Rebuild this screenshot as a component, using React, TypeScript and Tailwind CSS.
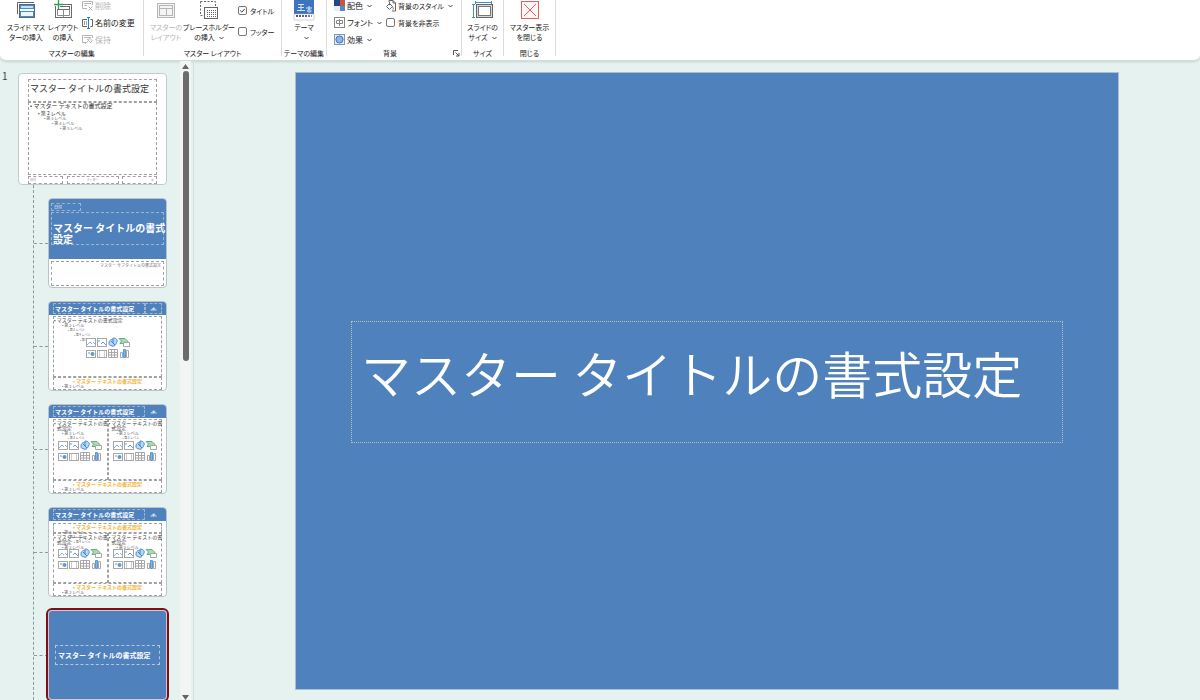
import { useState } from 'react'
import type { ReactNode } from 'react'
import clsx from 'clsx'

const MASTER_TITLE = 'マスター タイトルの書式設定'
const MASTER_TEXT = 'マスター テキストの書式設定'

/* ---------- Ribbon parts ---------- */

function Group({ label, className, launcher, children }: { label: string; className: string; launcher?: boolean; children: ReactNode }) {
  return (
    <section className={clsx('flex shrink-0 flex-col border-r border-[#dcdcdc]', className)}>
      <div className="flex h-12 shrink-0 items-start">{children}</div>
      <div className="flex h-[11px] shrink-0 items-center">
        <h2 className="flex-1 whitespace-nowrap text-center leading-[11px]">{label}</h2>
        {launcher && (
          <button aria-label="背景の書式設定" className="pr-px">
            <svg width="7" height="7" viewBox="0 0 7 7" fill="none" stroke="#555">
              <path d="M.5 5V.5H5M2.500 2.500l3.500 3.500M6 3v3H3" />
            </svg>
          </button>
        )}
      </div>
    </section>
  )
}

function Caret() {
  return (
    <svg width="5" height="4" viewBox="0 0 5 4" fill="none" stroke="#444" className="ml-1 inline-block shrink-0">
      <path d="M.5 1l2 2 2-2" />
    </svg>
  )
}

function BigButton({ icon, children, className, disabled }: { icon: ReactNode; children: ReactNode; className: string; disabled?: boolean }) {
  return (
    <button disabled={disabled} className={clsx('flex shrink-0 flex-col items-center whitespace-nowrap leading-[10px] disabled:text-[#b5b5b5]', className)}>
      <span className="flex h-[22px] items-start">{icon}</span>
      <span className="text-center">{children}</span>
    </button>
  )
}

function SmallButton({ icon, label, caret, disabled }: { icon: ReactNode; label: string; caret?: boolean; disabled?: boolean }) {
  return (
    <button disabled={disabled} className="flex h-[17px] items-center whitespace-nowrap leading-[10px] disabled:text-[#b5b5b5]">
      <span className="mr-[2px] shrink-0">{icon}</span>
      {label}
      {caret && <Caret />}
    </button>
  )
}

function Check({ label, defaultChecked }: { label: string; defaultChecked?: boolean }) {
  return (
    <label className="flex h-[17px] items-center gap-[3px] whitespace-nowrap leading-[10px]">
      <span className="grid">
        <input
          type="checkbox"
          defaultChecked={defaultChecked}
          className="peer col-start-1 row-start-1 size-[9px] appearance-none rounded-[2px] border border-[#777] bg-white"
        />
        <svg viewBox="0 0 9 9" fill="none" stroke="#333" className="pointer-events-none invisible col-start-1 row-start-1 size-[9px] peer-checked:visible">
          <path d="M2.200 4.500l1.600 1.600 3-3.200" />
        </svg>
      </span>
      {label}
    </label>
  )
}

const slideMasterIcon = (
  <svg width="20" height="20" viewBox="0 0 20 20" fill="none">
    <path d="M1.500 14V2.500H18" stroke="#666" />
    <rect x="3.500" y="4.500" width="15" height="13" fill="#fff" stroke="#666" />
    <rect x="4.500" y="5.500" width="13" height="3" fill="#c5e2f8" stroke="#3a8fd6" />
    <rect x="4.500" y="11.500" width="13" height="5" fill="#e9f4fd" stroke="#3a8fd6" />
  </svg>
)

const insertLayoutIcon = (
  <svg width="20" height="20" viewBox="0 0 20 20" fill="none">
    <rect x="2.500" y="4.500" width="16" height="13" stroke="#6b6b6b" />
    <rect x="4.500" y="6.500" width="12" height="3" stroke="#6b6b6b" />
    <path d="M10.500 9.500v8M4.500 9.500v6h12v-6" stroke="#8a8a8a" />
    <path d="M5.500 0v9M1 4.500h9" stroke="#fff" strokeWidth="3" />
    <path d="M5.500 0v9M1 4.500h9" stroke="#2f9e55" strokeWidth="1.300" />
  </svg>
)

const masterLayoutIcon = (
  <svg width="20" height="20" viewBox="0 0 20 20" fill="#f4f4f4" stroke="#b5b5b5">
    <rect x="1.500" y="3.500" width="17" height="14" />
    <rect x="3.500" y="5.500" width="13" height="3" />
    <rect x="3.500" y="8.500" width="7" height="7" />
    <rect x="10.500" y="8.500" width="6" height="7" />
  </svg>
)

const placeholderIcon = (
  <svg width="20" height="20" viewBox="0 0 20 20" fill="none">
    <rect x="1.500" y="1.500" width="15" height="14" stroke="#666" strokeDasharray="2 1.500" />
    <rect x="5.500" y="7.500" width="13" height="11" fill="#fff" stroke="#666" />
    <path d="M8 10.500h9M8 12.500h9M8 14.500h9M8 16.500h9" stroke="#666" strokeDasharray="1 1" />
  </svg>
)

const themeIcon = (
  <svg width="22" height="22" viewBox="0 0 22 22" fill="none">
    <rect x="1" y="0" width="20" height="20" fill="#3e74bd" />
    <rect x="1" y="14" width="20" height="6" fill="#fff" stroke="#aaa" strokeWidth=".5" />
    <path d="M5 4.500h6M5 7.500h6M4 10.500h8M8 4.500v6M13 8h6M16 6v6M14 11c1-2 4-2 4 0s-3 1-4 0" stroke="#d4e4f6" />
    <g strokeWidth="2">
      <path d="M3 16h2" stroke="#2b579a" />
      <path d="M6 16h2" stroke="#c0392b" />
      <path d="M9 16h2" stroke="#2e8b57" />
      <path d="M12 16h2" stroke="#7a4fa3" />
      <path d="M15 16h2" stroke="#2b9ec4" />
      <path d="M18 16h1" stroke="#e08b2c" />
    </g>
  </svg>
)

const slideSizeIcon = (
  <svg width="22" height="20" viewBox="0 0 22 20" fill="none">
    <path d="M3 2.500h17M3.500 1v3M19.500 1v3M1.500 4v14M0 4.500h3M0 17.500h3" stroke="#3a8fd6" />
    <rect x="4.500" y="4.500" width="16" height="13" fill="#d9d9d9" stroke="#666" />
    <rect x="6.500" y="6.500" width="12" height="9" fill="#fff" stroke="#777" />
  </svg>
)

const closeMasterIcon = (
  <svg width="20" height="20" viewBox="0 0 20 20" fill="none" stroke="#e0625a">
    <rect x="1.500" y="1.500" width="17" height="17" fill="#fdf6f6" />
    <path d="M4 4l12 12M16 4L4 16" />
  </svg>
)

const deleteIcon = (
  <svg width="11" height="11" viewBox="0 0 11 11" fill="none" stroke="#b5b5b5">
    <path d="M5 8.500H.5v-7h10V5M2 3.500h7M2.500 5.500H5M6.500 6.500l4 4M10.500 6.500l-4 4" />
  </svg>
)

const renameIcon = (
  <svg width="11" height="12" viewBox="0 0 11 12" fill="none">
    <path d="M5 2.500H.5v7H5M8.500 2.500h2v7h-2" stroke="#666" />
    <path d="M2.500 4v4" stroke="#999" />
    <path d="M5 .5h3M6.500 .5v11M5 11.500h3" stroke="#2f7dc4" />
    <path d="M4.500 4v4" stroke="#7db4e4" />
  </svg>
)

const preserveIcon = (
  <svg width="11" height="11" viewBox="0 0 11 11" fill="none" stroke="#b5b5b5">
    <path d="M4 8.500H.5v-7h10V4M2 3.500h7M3 10l3-3M5 5l4 4M6 5.500l2-1 2 2-1 2" />
  </svg>
)

const colorsIcon = (
  <svg width="11" height="11" viewBox="0 0 11 11">
    <path d="M0 0h6v6H0z" fill="#24477f" />
    <path d="M6 0h5v6H6z" fill="#c9543f" />
    <path d="M0 6h6v5H0z" fill="#e9edf3" />
    <path d="M6 6h5v5H6z" fill="#5c86c5" />
  </svg>
)

const fontsIcon = (
  <svg width="11" height="11" viewBox="0 0 11 11" fill="none" stroke="#888">
    <rect x=".5" y=".5" width="10" height="10" />
    <path d="M2.500 3.500h6v3h-6zM5.500 2v7" />
  </svg>
)

const effectsIcon = (
  <svg width="11" height="11" viewBox="0 0 11 11">
    <rect x=".5" y=".5" width="10" height="10" fill="#e8eef8" stroke="#8a96a8" />
    <circle cx="5.500" cy="5.500" r="3.600" fill="#8fb4e8" stroke="#3e74bd" />
  </svg>
)

const bgStyleIcon = (
  <svg width="10" height="12" viewBox="0 0 10 12" fill="none" stroke="#666">
    <path d="M3 2V.5h4l2.500 2.500v8H6M7 .5V3h2.500" />
    <path d="M3.500 3.500l3 3-3 3-3-3zM3.500 2v3M6.500 7c1 1 1 2 .5 2.500" />
  </svg>
)

function Ribbon() {
  return (
    <header className="flex h-[61px] shrink-0 overflow-hidden rounded-b-md border-b border-[#d3dcdb] bg-white pb-1 text-[7px] text-[#222] shadow-sm [font-feature-settings:'palt']">
      <Group label="マスターの編集" className="w-36">
        <BigButton icon={slideMasterIcon} className="ml-1 w-11">スライド マス<br />ターの挿入</BigButton>
        <BigButton icon={insertLayoutIcon} className="w-[30px]">レイアウト<br />の挿入</BigButton>
        <div className="-mt-[3px] ml-1 flex flex-col text-[8px]">
          <SmallButton icon={deleteIcon} label="削除" disabled />
          <SmallButton icon={renameIcon} label="名前の変更" />
          <SmallButton icon={preserveIcon} label="保持" disabled />
        </div>
      </Group>
      <Group label="マスター レイアウト" className="w-[138px]">
        <BigButton icon={masterLayoutIcon} className="ml-1 w-9" disabled>マスターの<br />レイアウト</BigButton>
        <BigButton icon={placeholderIcon} className="w-[50px]">プレースホルダー<br />の挿入<Caret /></BigButton>
        <div className="ml-1 flex flex-col gap-1 pt-[2px]">
          <Check label="タイトル" defaultChecked />
          <Check label="フッター" />
        </div>
      </Group>
      <Group label="テーマの編集" className="w-[45px]">
        <BigButton icon={themeIcon} className="w-11">テーマ<br /><Caret /></BigButton>
      </Group>
      <Group label="背景" className="w-[135px]" launcher>
        <div className="-mt-[3px] ml-[7px] flex w-11 shrink-0 flex-col text-[8px]">
          <SmallButton icon={colorsIcon} label="配色" caret />
          <SmallButton icon={fontsIcon} label="フォント" caret />
          <SmallButton icon={effectsIcon} label="効果" caret />
        </div>
        <div className="-mt-[3px] ml-2 flex flex-col">
          <SmallButton icon={bgStyleIcon} label="背景のスタイル" caret />
          <Check label="背景を非表示" />
        </div>
      </Group>
      <Group label="サイズ" className="w-[42px]">
        <BigButton icon={slideSizeIcon} className="w-full">スライドの<br />サイズ<Caret /></BigButton>
      </Group>
      <Group label="閉じる" className="w-[52px]">
        <BigButton icon={closeMasterIcon} className="w-full">マスター表示<br />を閉じる</BigButton>
      </Group>
    </header>
  )
}

/* ---------- Thumbnail parts ---------- */

function ContentIcons() {
  return (
    <svg width="44" height="22" viewBox="0 0 44 22" fill="none" stroke="#a8a8a8" className="absolute left-1/2 top-5 -translate-x-1/2">
      <rect x=".5" y="1.500" width="9" height="8" fill="#fff" />
      <path d="M1 8l3-3 2 2M7 5l2 2" stroke="#7db4e4" />
      <rect x="11.500" y="1.500" width="9" height="8" fill="#fff" />
      <path d="M12 4h2M15 7l2-2 3 3" stroke="#5b9bd5" />
      <path d="M23 6c0-4 4-3 4-5 3 0 5 2 4 4s-2 5-5 4-3-1-3-3z" fill="#b9d7f2" stroke="#4b8fd0" />
      <path d="M25 4l4 4M27 2v4" stroke="#3a86c8" />
      <path d="M33 1.500h6l3 3-3 2h-5l1.500-2.500z" fill="#a8d8b4" stroke="#63b27a" />
      <path d="M37.500 5.500h6v4h-6z" fill="#fff" />
      <rect x=".5" y="13.500" width="9" height="7" fill="#fff" />
      <circle cx="6.500" cy="17" r="2" fill="#5b9bd5" stroke="none" />
      <path d="M2 16h2" stroke="#5b9bd5" />
      <rect x="11.500" y="13.500" width="9" height="7" fill="#fff" />
      <path d="M13.500 14v6M18.500 14v6" stroke="#ccc" />
      <path d="M22.500 12.500h9v8h-9zM22.500 15.500h9M22.500 18h9M25.500 12.500v8M28.500 12.500v8" fill="#fff" />
      <path d="M34.500 15.500h2v5h-2z" fill="#fff" />
      <path d="M37.500 12.500h2v8h-2z" fill="#7db4e4" stroke="#5b9bd5" />
      <path d="M40.500 13.500h2v7h-2z" fill="#fff" />
    </svg>
  )
}

function Levels({ lead, count }: { lead?: ReactNode; count: number }) {
  return (
    <span className="flex flex-col whitespace-nowrap text-[3px] leading-[5px] text-[#666]">
      {lead && <span className="mb-px flex gap-px text-[5px] text-[#444]"><span>•</span><span>{lead}</span></span>}
      {count > 0 && <span className="pl-2 text-[4px]">• 第 2 レベル</span>}
      {count > 1 && <span className="pl-[14px]">• 第 3 レベル</span>}
      {count > 2 && <span className="pl-5">• 第 4 レベル</span>}
      {count > 3 && <span className="pl-[26px]">• 第 5 レベル</span>}
    </span>
  )
}

function Header({ boxedNumber }: { boxedNumber?: boolean }) {
  return (
    <span className="flex h-[13px] bg-[#4f81bd] px-1 pt-px text-white">
      <span className="flex h-[11px] flex-1 items-center whitespace-nowrap border border-dashed border-[#9fb3cc] pl-px text-[6px] font-bold leading-[8px]">{MASTER_TITLE}</span>
      <span className={clsx('flex h-[11px] w-[17px] items-center justify-center text-[5px] font-bold', boxedNumber && 'border border-dashed border-[#9fb3cc]')}>‹#›</span>
    </span>
  )
}

function Caption({ count }: { count: number }) {
  return (
    <>
      <span className="block whitespace-nowrap text-center text-[5px] font-bold leading-[6px] text-[#f5b335]">• {MASTER_TEXT}</span>
      <Levels count={count} />
    </>
  )
}

const dashed = 'border border-dashed border-[#a0a0a0]'

function TitleLayout() {
  return (
    <>
      <span className="flex h-[60px] flex-col bg-[#4f81bd] px-[2px] pt-1 text-white">
        <span className="flex h-2 w-[30px] items-center border border-dashed border-[#9fb3cc] pl-[2px] text-[4px]">日付</span>
        <span className="mt-px flex h-[33px] flex-col justify-end whitespace-nowrap border border-dashed border-[#9fb3cc] pl-px text-[10px] font-bold leading-[11px]">
          <span>マスター タイトルの書式</span>
          <span>設定</span>
        </span>
      </span>
      <span className={clsx('mx-[2px] mt-[2px] h-[25px] pr-[2px] text-right text-[4px] leading-[6px] text-[#777]', dashed)}>マスター サブタイトルの書式設定</span>
    </>
  )
}

function ContentLayout() {
  return (
    <>
      <Header boxedNumber />
      <span className="flex flex-1 flex-col px-1 pt-px">
        <span className={clsx('relative h-[61px]', dashed)}>
          <Levels lead={MASTER_TEXT} count={4} />
          <ContentIcons />
        </span>
        <span className={clsx('h-[13px]', dashed)}><Caption count={1} /></span>
      </span>
    </>
  )
}

const wrappedText = <>マスター テキストの書<br />式設定</>

function TwoContentLayout() {
  return (
    <>
      <Header />
      <span className="flex flex-1 flex-col px-1 pt-px">
        <span className="grid h-[61px] grid-cols-2">
          <span className={clsx('relative', dashed)}><Levels lead={wrappedText} count={2} /><ContentIcons /></span>
          <span className={clsx('relative', dashed)}><Levels lead={wrappedText} count={2} /><ContentIcons /></span>
        </span>
        <span className={clsx('h-[13px]', dashed)}><Caption count={1} /></span>
      </span>
    </>
  )
}

function ComparisonLayout() {
  return (
    <>
      <Header />
      <span className="flex flex-1 flex-col px-1 pt-[2px]">
        <span className={clsx('h-[10px]', dashed)}><Caption count={3} /></span>
        <span className="grid h-[50px] grid-cols-2">
          <span className={clsx('relative', dashed)}><Levels lead={wrappedText} count={1} /><span className="absolute inset-x-0 -top-[6px]"><ContentIcons /></span></span>
          <span className={clsx('relative', dashed)}><Levels lead={wrappedText} count={1} /><span className="absolute inset-x-0 -top-[6px]"><ContentIcons /></span></span>
        </span>
        <span className={clsx('h-[13px]', dashed)}><Caption count={1} /></span>
      </span>
    </>
  )
}

function TitleOnlyLayout() {
  return (
    <span className="flex flex-1 flex-col bg-[#4f81bd] px-[6px] pt-[34px]">
      <span className="flex h-5 items-center whitespace-nowrap border border-dashed border-[#b9c6d6] pl-[2px] text-[7px] font-bold text-white">{MASTER_TITLE}</span>
    </span>
  )
}

function MasterThumb() {
  return (
    <button aria-label="スライド マスター" className="flex h-[113px] flex-col rounded border border-[#c3cbca] bg-white px-[9px] pt-[5px] text-left">
      <span className={clsx('flex h-[23px] w-full items-center whitespace-nowrap pb-1 pl-px text-[9px] text-[#333]', dashed)}>{MASTER_TITLE}</span>
      <span className={clsx('flex h-[73px] w-full flex-col whitespace-nowrap pl-px text-[4px] leading-[5px] text-[#666]', dashed)}>
        <span className="text-[6px] leading-[6px] text-[#333]">• {MASTER_TEXT}</span>
        <span className="pl-2 text-[5px] leading-[7px] text-[#333]">• 第 2 レベル</span>
        <span className="pl-[14px]">• 第 3 レベル</span>
        <span className="pl-[22px]">• 第 4 レベル</span>
        <span className="pl-[30px]">• 第 5 レベル</span>
      </span>
      <span className="flex w-full justify-between pt-px text-[3px] leading-[6px] text-[#888]">
        <span className={clsx('h-2 w-[35px] pl-px', dashed)}>日付</span>
        <span className={clsx('h-2 w-[52px] text-center', dashed)}>フッター</span>
        <span className={clsx('h-2 w-[35px] pr-[2px] text-right', dashed)}>‹#›</span>
      </span>
    </button>
  )
}

const layouts = [
  { name: 'タイトル スライド', Preview: TitleLayout },
  { name: 'タイトルとコンテンツ', Preview: ContentLayout },
  { name: '2 つのコンテンツ', Preview: TwoContentLayout },
  { name: '比較', Preview: ComparisonLayout },
  { name: 'タイトルのみ', Preview: TitleOnlyLayout },
]

function SlidePane() {
  const [selected, setSelected] = useState(4)

  return (
    <aside className="flex w-[194px] shrink-0 border-r border-[#d3e0de]">
      <span className="w-[18px] shrink-0 pl-[2px] pt-2 text-[10px] leading-[14px] text-[#444]">1</span>
      <div className="flex w-[149px] shrink-0 flex-col pt-3">
        <MasterThumb />
        <ul className="ml-[15px] flex flex-col gap-[13px] border-l border-dashed border-[#8a9a98] pt-[13px]">
          {layouts.map(({ name, Preview }, i) => (
            <li key={name} className="flex items-center">
              <span className="w-[14px] border-t border-dashed border-[#8a9a98]" />
              <button
                aria-label={name}
                aria-pressed={selected === i}
                onClick={() => setSelected(i)}
                className={clsx(
                  'flex h-[90px] flex-1 flex-col overflow-hidden rounded border bg-white text-left',
                  selected === i ? 'border-[#d9c3c6] outline-2 outline-[#7d0f1c]' : 'border-[#b9c4c8]'
                )}
              >
                <Preview />
              </button>
            </li>
          ))}
        </ul>
      </div>
      {/* Scrollbar */}
      <div className="ml-[13px] flex w-[11px] shrink-0 flex-col items-center bg-[#f3f5f5] pt-[3px]">
        <svg width="7" height="5" viewBox="0 0 7 5" fill="#666"><path d="M3.500 0L7 5H0z" /></svg>
        <div className="mt-[2px] h-[290px] w-[6px] rounded-full bg-[#6b6b6b]" />
        <svg width="7" height="5" viewBox="0 0 7 5" fill="#666" className="mt-auto"><path d="M3.500 5L0 0h7z" /></svg>
      </div>
    </aside>
  )
}

export default function App() {
  return (
    <div className="flex h-screen flex-col overflow-hidden bg-[#e6f2ef] font-['Noto_Sans_CJK_JP',sans-serif]">
      <Ribbon />
      <div className="flex min-h-0 flex-1">
        <SlidePane />
        <main className="flex-1 pl-[101px] pr-[81px] pt-[11px]">
          <div className="flex aspect-[4/3] flex-col border border-[#a9bfd6] bg-[#4f81bd] px-[55px] pt-[248px]">
            <h1 className="flex h-[122px] items-center whitespace-nowrap border border-dotted border-[#b9c0bd] pb-5 pl-[9px] text-[50px] font-[350] text-white">
              {MASTER_TITLE}
            </h1>
          </div>
        </main>
      </div>
    </div>
  )
}
